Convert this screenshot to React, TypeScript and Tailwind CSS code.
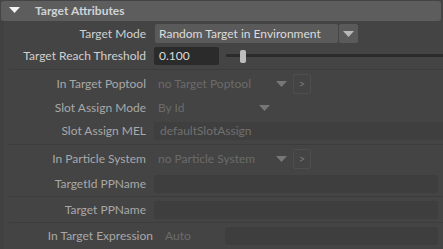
import React from "react";

const font = { fontFamily: 'Lato, "Noto Sans", sans-serif' };

const Label = ({ text, dim = false, w = "w-[142px]" }: { text: string; dim?: boolean; w?: string }) => (
  <div className={`${w} shrink-0 text-right text-[12px] ${dim ? "text-[#a8a8a8]" : "text-[#d0d0d0]"}`}>{text}</div>
);

const Arrow = ({ color = "#b8b8b8" }: { color?: string }) => (
  <svg width="11" height="6" viewBox="0 0 11 6">
    <polygon points="0,0 11,0 5.5,6" fill={color} />
  </svg>
);

const Sep = () => <div className="h-px bg-[#3c3c3c] ml-[5px]" />;

const LinkBtn = () => (
  <div className="ml-[6px] w-[18px] h-[20px] border border-[#4e4e4e] rounded-[2px] flex items-center justify-center text-[11px] text-[#777]">&gt;</div>
);

const App = () => {
  return (
    <div className="w-[443px] h-[249px] bg-[#444444] overflow-hidden flex flex-col" style={font}>
      {/* Section header */}
      <div className="mt-[1px] ml-[1px] mr-[2px] h-[20px] bg-[#5d5d5d] rounded-[3px] flex items-center">
        <div className="ml-[8px] mt-[-2px]">
          <Arrow color="#f2f2f2" />
        </div>
        <span className="ml-[15px] text-[12px] font-bold text-[#cfd3d8]">Target Attributes</span>
      </div>

      <div className="flex flex-col border-l-[4px] border-[#414141] flex-1">
        {/* Target Mode */}
        <div className="h-[23px] mt-[1px] flex items-center">
          <Label text="Target Mode" />
          <div className="ml-[9px] w-[183px] h-[19px] bg-[#5a5a5a] rounded-[2px] flex items-center pl-[4px] text-[12px] text-[#dcdcdc]">
            Random Target in Environment
          </div>
          <div className="ml-[1px] w-[19px] h-[19px] bg-[#5a5a5a] rounded-[2px] flex items-center justify-center">
            <Arrow />
          </div>
        </div>

        {/* Target Reach Threshold */}
        <div className="h-[21px] flex items-center">
          <Label text="Target Reach Threshold" />
          <div className="ml-[8px] w-[65px] h-[18px] bg-[#2b2b2b] rounded-[2px] flex items-center pl-[5px] text-[12px] text-[#dcdcdc]">
            0.100
          </div>
          <div className="ml-[7px] flex-1 relative h-[14px] flex items-center">
            <div className="w-full h-[3px] bg-[#2b2b2b] rounded-l-[2px]" />
            <div className="absolute left-[14px] top-[1px] w-[6px] h-[13px] bg-[#bdbdbd] rounded-[2px]" />
          </div>
        </div>

        <div className="h-[3px]" />
        <Sep />

        {/* In Target Poptool */}
        <div className="h-[24px] mt-[2px] flex items-center">
          <Label text="In Target Poptool" dim />
          <div className="ml-[12px] w-[118px] text-[12px] text-[#6b6b6b]">no Target Poptool</div>
          <Arrow color="#777" />
          <LinkBtn />
        </div>

        {/* Slot Assign Mode */}
        <div className="h-[24px] flex items-center">
          <Label text="Slot Assign Mode" dim />
          <div className="ml-[12px] w-[101px] text-[12px] text-[#6b6b6b]">By Id</div>
          <Arrow color="#777" />
        </div>

        {/* Slot Assign MEL */}
        <div className="h-[22px] flex items-center">
          <Label text="Slot Assign MEL" dim />
          <div className="ml-[8px] flex-1 h-[18px] bg-[#3f3f3f] flex items-center pl-[6px] text-[12px] text-[#707070]">
            defaultSlotAssign
          </div>
        </div>

        <div className="h-[2px]" />
        <Sep />

        {/* In Particle System */}
        <div className="h-[24px] mt-[2px] flex items-center">
          <Label text="In Particle System" dim />
          <div className="ml-[12px] w-[118px] text-[12px] text-[#6b6b6b]">no Particle System</div>
          <Arrow color="#777" />
          <LinkBtn />
        </div>

        {/* TargetId PPName */}
        <div className="h-[24px] mt-[1px] flex items-center">
          <Label text="TargetId PPName" dim />
          <div className="ml-[8px] mr-[5px] flex-1 h-[18px] bg-[#3e3e3e] rounded-[3px]" />
        </div>
        <Sep />

        {/* Target PPName */}
        <div className="h-[25px] flex items-center">
          <Label text="Target PPName" dim />
          <div className="ml-[8px] mr-[5px] flex-1 h-[18px] bg-[#3e3e3e] rounded-[3px]" />
        </div>
        <Sep />

        {/* In Target Expression */}
        <div className="h-[26px] flex items-center">
          <Label text="In Target Expression" dim w="w-[149px]" />
          <div className="ml-[12px] w-[60px] text-[12px] text-[#6b6b6b]">Auto</div>
          <div className="mr-[5px] flex-1 h-[18px] bg-[#3e3e3e] rounded-[3px]" />
        </div>
      </div>
    </div>
  );
};

export default App;
